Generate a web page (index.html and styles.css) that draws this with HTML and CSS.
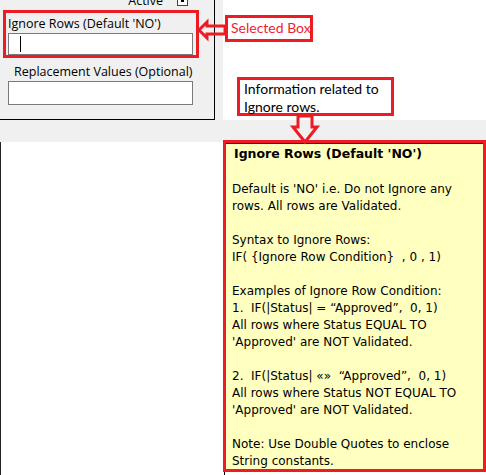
FILE: index.html
```html
<!DOCTYPE html>
<html>
<head>
<meta charset="utf-8">
<link rel="stylesheet" href="styles.css">
</head>
<body>
<div class="page">
  <div class="top">
    <div class="panel">
      <div class="active-row">
        <span class="active-label">Active</span>
        <span class="combo"><span class="combo-mark"></span></span>
      </div>
      <div class="field-sel">
        <div class="field-label">Ignore Rows (Default 'NO')</div>
        <div class="input"><span class="caret"></span></div>
      </div>
      <div class="field-label field-label-2">Replacement Values (Optional)</div>
      <div class="input input-2"></div>
    </div>
    <div class="notes">
      <div class="callout callout-sel">Selected Box</div>
      <div class="callout callout-info">Information related to<br>Ignore rows.</div>
    </div>
  </div>
  <div class="band"></div>
  <div class="bottom">
    <div class="blank"></div>
    <div class="tipcol">
      <div class="tip">
        <p class="tip-title">Ignore Rows (Default 'NO')</p>
        <p>Default is 'NO' i.e. Do not Ignore any<br>rows. All rows are Validated.</p>
        <p>Syntax to Ignore Rows:<br>IF( {Ignore Row Condition}  , 0 , 1)</p>
        <p>Examples of Ignore Row Condition:<br>1.  IF(|Status| = “Approved”,  0, 1)<br>All rows where Status EQUAL TO<br>'Approved' are NOT Validated.</p>
        <p>2.  IF(|Status| «»  “Approved”,  0, 1)<br>All rows where Status NOT EQUAL TO<br>'Approved' are NOT Validated.</p>
        <p>Note: Use Double Quotes to enclose<br>String constants.</p>
      </div>
      <div class="tail"></div>
    </div>
  </div>
  <svg class="arrows" width="486" height="475" viewBox="0 0 486 475">
    <polygon points="225,26 207,26 207,22 199,30 207,38 207,34 225,34" fill="none" stroke="#ed1c24" stroke-width="3" stroke-linejoin="miter"/>
    <polygon points="298,116 298,127 293,127 305,142 317,127 312,127 312,116" fill="none" stroke="#ed1c24" stroke-width="3" stroke-linejoin="miter"/>
  </svg>
</div>
</body>
</html>
```
FILE: styles.css
```css
html, body {
  margin: 0;
  padding: 0;
}
body {
  background: #ffffff;
}
.page {
  position: relative;
  width: 486px;
  height: 475px;
  overflow: hidden;
  background: #f0f0f0;
  font-family: "Open Sans", "Noto Sans", sans-serif;
}
.top {
  display: grid;
  grid-template-columns: 223px 1fr;
  height: 120px;
}
.panel {
  box-sizing: border-box;
  width: 215px;
  height: 120px;
  border-right: 1px solid #000;
  border-bottom: 1px solid #000;
  background: #f0f0f0;
  display: flex;
  flex-direction: column;
  align-items: flex-start;
  font-size: 12.5px;
  color: #000;
}
.active-row {
  display: flex;
  align-items: flex-start;
  align-self: flex-end;
  gap: 14px;
  height: 13px;
  margin-top: -6px;
  padding-right: 26px;
  line-height: 13px;
}
.active-label {
  font-size: 12.5px;
}
.combo {
  box-sizing: border-box;
  width: 11px;
  height: 13px;
  margin-top: -1px;
  border: 1px solid #444;
  background: #fff;
  display: flex;
  justify-content: center;
  align-items: flex-end;
  padding-bottom: 3px;
}
.combo-mark {
  width: 3px;
  height: 4px;
  background: #000;
}
.field-sel {
  box-sizing: border-box;
  width: 196px;
  height: 48px;
  margin-top: 3px;
  margin-left: 3px;
  border: 3px solid #ed1c24;
  padding: 3px 3px 0 2px;
  display: flex;
  flex-direction: column;
}
.field-label {
  line-height: 15px;
  white-space: nowrap;
}
.field-label-2 {
  margin-top: 6px;
  padding-left: 14px;
}
.input {
  box-sizing: border-box;
  width: 185px;
  height: 22px;
  margin-top: 2px;
  border: 1px solid #7a7a7a;
  background: #fff;
  display: flex;
}
.caret {
  width: 1px;
  height: 16px;
  margin-top: 2px;
  margin-left: 11px;
  background: #000;
}
.input-2 {
  height: 24px;
  margin-left: 8px;
}
.notes {
  background: #fff;
  height: 120px;
  display: flex;
  flex-direction: column;
  align-items: flex-start;
  font-family: Lato, "Open Sans", sans-serif;
  font-size: 14px;
}
.callout {
  box-sizing: border-box;
  border: 3px solid #ed1c24;
  white-space: nowrap;
}
.callout-sel {
  width: 88px;
  height: 27px;
  margin-top: 15px;
  margin-left: 2px;
  padding-left: 3px;
  color: #ec2436;
  line-height: 20px;
}
.callout-info {
  width: 157px;
  height: 39px;
  margin-top: 35px;
  margin-left: 14px;
  padding-left: 4px;
  color: #000;
  line-height: 18px;
}
.band {
  height: 22px;
}
.bottom {
  display: grid;
  grid-template-columns: 223px 1fr;
  height: 333px;
}
.blank {
  background: #fff;
  border-left: 1px solid #222;
}
.tipcol {
  background: #fff;
  display: flex;
  flex-direction: column;
}
.tip {
  box-sizing: border-box;
  height: 332px;
  margin-top: -2px;
  border: 3px solid #ed1c24;
  background: #ffffc0;
  box-shadow: inset 0 1px 0 #222;
  padding: 2px 0 0 6px;
  font-family: "DejaVu Sans", Verdana, sans-serif;
  font-size: 12px;
  line-height: 17px;
  color: #000;
}
.tip p {
  margin: 0 0 17px 0;
  white-space: pre;
}
.tip p.tip-title {
  font-weight: bold;
  font-size: 12.5px;
  margin-left: 2px;
  margin-bottom: 19px;
}
.tail {
  height: 3px;
  margin-left: 1px;
  border-left: 1px solid #000;
}
.arrows {
  position: absolute;
  left: 0;
  top: 0;
  pointer-events: none;
}
```
